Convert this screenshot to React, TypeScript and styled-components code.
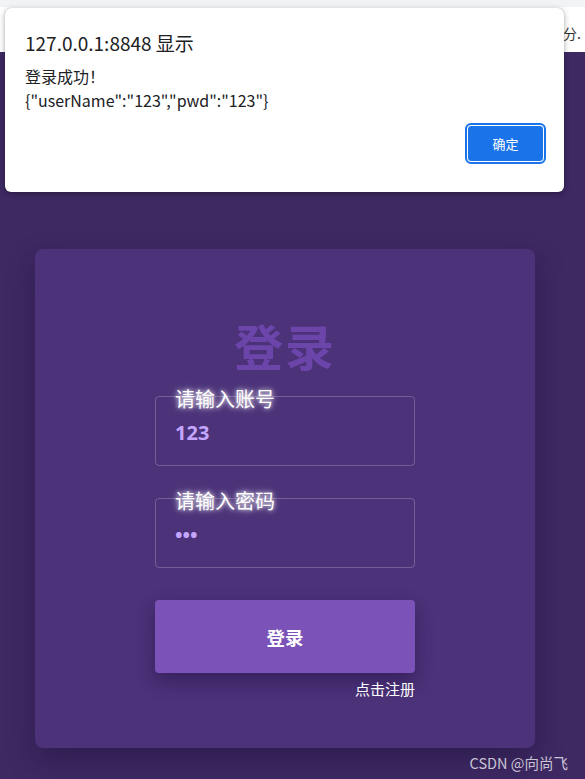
import styled, { createGlobalStyle } from "styled-components";

const GlobalStyle = createGlobalStyle`
  html, body {
    margin: 0;
    padding: 0;
    background: #3e2963;
  }
  body {
    font-family: "Noto Sans", "Noto Sans CJK SC", sans-serif;
  }
`;

const Page = styled.div`
  position: relative;
  width: 585px;
  height: 779px;
  overflow: hidden;
  display: flex;
  flex-direction: column;
`;

const BrowserStrip = styled.div`
  height: 7px;
  background: #f1f3f4;
`;

const TopBand = styled.div`
  height: 45px;
  background: #fff;
  display: flex;
  align-items: center;
  padding: 6px 0 0 563px;
  box-sizing: border-box;
  font-family: "Noto Sans CJK SC", sans-serif;
  font-size: 14px;
  color: #333;
  white-space: nowrap;
`;

const Stage = styled.main`
  flex: 1;
  background: #3e2963;
  display: flex;
  padding: 197px 0 0 35px;
`;

const Card = styled.section`
  width: 500px;
  height: 499px;
  box-sizing: border-box;
  background: #4b3279;
  border-radius: 8px;
  box-shadow: 0 12px 28px rgba(20, 8, 40, 0.35);
  padding-top: 72px;
  display: flex;
  flex-direction: column;
  align-items: center;
`;

const Title = styled.h1`
  margin: 0;
  font-family: "Noto Sans CJK SC", sans-serif;
  font-size: 49px;
  line-height: 48px;
  font-weight: 700;
  color: #6c45aa;
  letter-spacing: 2px;
`;

const Form = styled.div`
  width: 260px;
  display: flex;
  flex-direction: column;
  margin-top: 27px;
`;

const Field = styled.label<{ $top?: number }>`
  position: relative;
  display: block;
  height: 70px;
  box-sizing: border-box;
  border: 1px solid rgba(255, 255, 255, 0.22);
  border-radius: 4px;
  margin-top: ${({ $top }) => $top ?? 0}px;
`;

const FieldLabel = styled.span`
  position: absolute;
  left: 19px;
  top: -10px;
  font-family: "Noto Sans CJK SC", sans-serif;
  font-size: 20px;
  line-height: 24px;
  color: #fff;
  text-shadow: 0 0 4px rgba(255, 255, 255, 0.9), 0 0 8px rgba(255, 255, 255, 0.5);
`;

const FieldInput = styled.input`
  display: block;
  width: 100%;
  box-sizing: border-box;
  margin-top: 22px;
  padding: 0 19px;
  height: 26px;
  border: none;
  outline: none;
  background: transparent;
  font-family: "Noto Sans", sans-serif;
  font-size: 20px;
  font-weight: 700;
  color: #c4a6ff;
`;

const SubmitButton = styled.button`
  margin-top: 32px;
  height: 73px;
  border: none;
  border-radius: 4px;
  background: #7a52b8;
  color: #fff;
  font-family: "Noto Sans CJK SC", sans-serif;
  font-size: 18.5px;
  font-weight: 700;
  box-shadow: 0 8px 18px rgba(30, 12, 60, 0.45);
`;

const RegisterLink = styled.a`
  align-self: flex-end;
  margin-top: 6px;
  font-family: "Noto Sans CJK SC", sans-serif;
  font-size: 15px;
  line-height: 20px;
  color: #fff;
`;

const Watermark = styled.div`
  position: absolute;
  right: 17px;
  bottom: 6px;
  font-family: "Noto Sans CJK SC", sans-serif;
  font-size: 14.5px;
  color: #c9c4d4;
`;

const Dialog = styled.div`
  position: absolute;
  left: 5px;
  top: 8px;
  width: 559px;
  height: 184px;
  box-sizing: border-box;
  background: #fff;
  border-radius: 6px;
  box-shadow: 0 2px 6px rgba(0, 0, 0, 0.3), 0 0 1px rgba(0, 0, 0, 0.4);
  padding: 21px 20px 0 20px;
  display: flex;
  flex-direction: column;
  font-family: "Noto Sans CJK SC", sans-serif;
  color: #202124;
`;

const DialogTitle = styled.div`
  font-size: 19px;
  line-height: 28px;
`;

const DialogMessage = styled.div`
  margin-top: 7px;
  font-size: 16px;
  line-height: 24px;
`;

const DialogActions = styled.div`
  display: flex;
  justify-content: flex-end;
  margin-top: 13px;
`;

const OkButton = styled.button`
  width: 77px;
  height: 37px;
  border: 1px solid #fff;
  outline: 2px solid #1a73e8;
  border-radius: 4px;
  background: #1a73e8;
  color: #fff;
  font-family: "Noto Sans CJK SC", sans-serif;
  font-size: 13px;
`;

export default function App() {
  return (
    <>
      <GlobalStyle />
      <Page>
        <BrowserStrip />
        <TopBand>分.</TopBand>
        <Stage>
          <Card>
            <Title>登录</Title>
            <Form>
              <Field>
                <FieldLabel>请输入账号</FieldLabel>
                <FieldInput type="text" defaultValue="123" readOnly />
              </Field>
              <Field $top={32}>
                <FieldLabel>请输入密码</FieldLabel>
                <FieldInput type="password" defaultValue="123" readOnly />
              </Field>
              <SubmitButton>登录</SubmitButton>
              <RegisterLink>点击注册</RegisterLink>
            </Form>
          </Card>
        </Stage>
        <Watermark>CSDN @向尚飞</Watermark>
        <Dialog>
          <DialogTitle>127.0.0.1:8848 显示</DialogTitle>
          <DialogMessage>
            登录成功！
            <br />
            {'{"userName":"123","pwd":"123"}'}
          </DialogMessage>
          <DialogActions>
            <OkButton>确定</OkButton>
          </DialogActions>
        </Dialog>
      </Page>
    </>
  );
}
